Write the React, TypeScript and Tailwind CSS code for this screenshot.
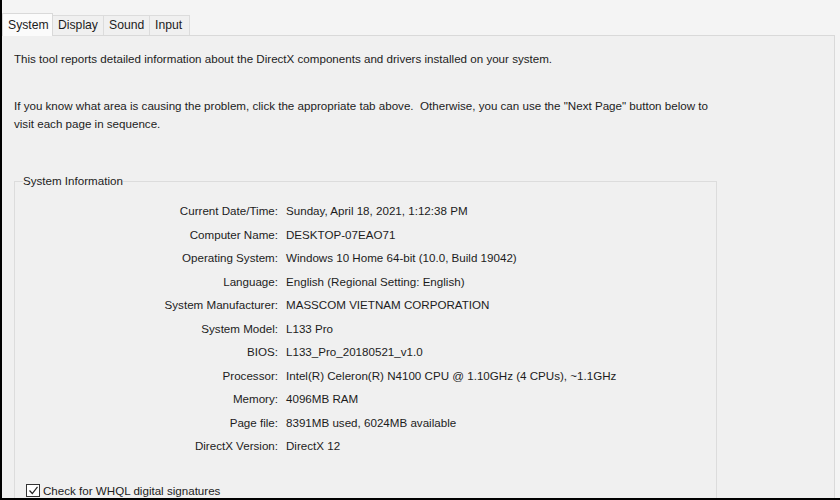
const rows: [string, string][] = [
  ["Current Date/Time:", "Sunday, April 18, 2021, 1:12:38 PM"],
  ["Computer Name:", "DESKTOP-07EAO71"],
  ["Operating System:", "Windows 10 Home 64-bit (10.0, Build 19042)"],
  ["Language:", "English (Regional Setting: English)"],
  ["System Manufacturer:", "MASSCOM VIETNAM CORPORATION"],
  ["System Model:", "L133 Pro"],
  ["BIOS:", "L133_Pro_20180521_v1.0"],
  ["Processor:", "Intel(R) Celeron(R) N4100 CPU @ 1.10GHz (4 CPUs), ~1.1GHz"],
  ["Memory:", "4096MB RAM"],
  ["Page file:", "8391MB used, 6024MB available"],
  ["DirectX Version:", "DirectX 12"],
];

const tabs = [
  { name: "Display", w: "w-[51px]" },
  { name: "Sound", w: "w-[46px]" },
  { name: "Input", w: "w-[40px]" },
];

export default function App() {
  return (
    <div className="w-[840px] h-[500px] overflow-hidden bg-[#f4f4f4] border-l-2 border-b-2 border-black font-['Liberation_Sans',Arial,sans-serif] text-[11.6px] text-[#1c1c1c] flex flex-col">
      {/* tab strip */}
      <div className="flex shrink-0 items-end h-[36px] pr-[5px]">
        <div className="flex items-end h-full flex-1 border-b border-[#d9d9d9]">
          <div className="h-[23px] w-[51px] pl-[5px] bg-[#fbfbfb] border border-b-0 border-[#d9d9d9] flex items-center text-[12.2px] -mb-px relative">
            System
          </div>
          {tabs.map((t) => (
            <div
              key={t.name}
              className={`h-[20px] ${t.w} pl-[5px] bg-[#f0f0f0] border border-l-0 border-b-0 border-[#dcdcdc] flex items-center text-[12.2px]`}
            >
              {t.name}
            </div>
          ))}
        </div>
      </div>

      {/* page */}
      <div className="flex-1 min-h-0 mr-[5px] border-r border-[#d9d9d9] bg-[#f0f0f0] pl-[12px] pt-[14px]">
        <p className="leading-[18px]">
          This tool reports detailed information about the DirectX components and drivers installed on your system.
        </p>
        <p className="leading-[18px] mt-[29px]">
          If you know what area is causing the problem, click the appropriate tab above.&nbsp; Otherwise, you can use the "Next Page" button below to
          <br />
          visit each page in sequence.
        </p>

        <fieldset className="mt-[40px] w-[703px] border border-b-0 border-[#dcdcdc] pl-[8px] pb-[10px]">
          <legend className="px-0 leading-[16px]">System Information</legend>
          <div className="grid grid-cols-[255px_1fr] gap-x-[8px] mt-[10px]">
            {rows.map(([k, v]) => (
              <div key={k} className="contents">
                <span className="text-right h-[23.5px] leading-[23.5px]">{k}</span>
                <span className="h-[23.5px] leading-[23.5px]">{v}</span>
              </div>
            ))}
          </div>
          <label className="flex items-center gap-[3px] mt-[24px] ml-[3px]">
            <span className="w-[14px] h-[13px] border border-[#333] bg-white flex items-center justify-center">
              <svg width="11" height="11" viewBox="0 0 11 11" fill="none">
                <path d="M1.5 5.5 L4.3 8.5 L9.5 1.8" stroke="#222" strokeWidth="1.2" />
              </svg>
            </span>
            <span>Check for WHQL digital signatures</span>
          </label>
        </fieldset>
      </div>
    </div>
  );
}
